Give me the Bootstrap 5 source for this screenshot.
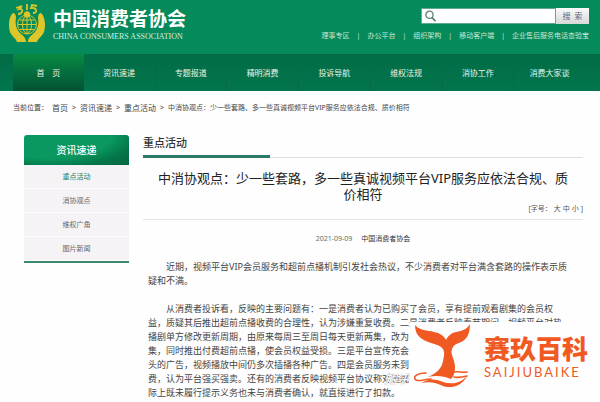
<!DOCTYPE html>
<html lang="zh-CN">
<head>
<meta charset="utf-8">
<meta name="viewport" content="width=device-width, initial-scale=1">
<title>中国消费者协会</title>
<link rel="stylesheet" href="https://cdn.jsdelivr.net/npm/bootstrap@5.3.0/dist/css/bootstrap.min.css">
<style>
body{font-family:"Noto Sans","Noto Sans CJK SC",sans-serif;font-size:7px;line-height:14px;color:#444;background:#fefefe}
a{color:inherit;text-decoration:none}
.topbar{background:#048a5b;color:#fff;padding:4px 11px 4px 9px;height:54px}
.emblem{width:36px;height:38px}
.brand-cn{font-size:19px;font-weight:700;line-height:26px;margin-top:2px}
.brand-en{font-family:"Liberation Serif",serif;font-size:8px;line-height:10px;color:#d5eee2}
.searchbox{height:16px;width:168px;margin-top:4px}
.searchbox .field{background:#fff;border:1px solid #5fa98c;padding:0 3px;min-width:0}
.searchbox input{border:0;outline:0;min-width:0;width:100%;font-size:8px;padding:0 4px}
.searchbox svg{flex:none}
.searchbox button{border:0;width:33px;flex:none;font-size:8px;line-height:14px;color:#667;background:linear-gradient(#fafafa,#d5d9d7);padding:0}
.quick{gap:7px;margin-top:5px;color:#c5e8d7}
.mainnav{background:linear-gradient(#016c45,#03754d);padding:0 15px 0 13px;height:37px;font-size:8px;color:#e4f5ec}
.mainnav a{flex:1 1 0;line-height:38px;text-align:center;border-right:1px solid #046a47}
.mainnav a:last-child{border:0}
.mainnav a.current{background:linear-gradient(#088a42,#046b3c 55%,#035232);border:0}
.crumbs{padding:10px 13px 0;gap:4px;color:#444}
.crumbs a{font-size:8px}
.page-cols{padding:20px 17px 0 24px;gap:14px}
.side{width:105px;flex:none;border-bottom:2px solid #3c8a70;color:#666}
.side h2{font-size:10px;line-height:30px;margin:0;color:#fff;border-radius:3px 3px 0 0;background:radial-gradient(ellipse at 25% 0,#0a9860 0 55%,#04784a 75%,#036540)}
.side a{line-height:24px;background:#f5f3f6;border-bottom:1px solid #fefefe;height:24px}
.side a.current{color:#167d5a}
.section-head{border-bottom:1px solid #ddd;height:23px}
.section-head h2{font-size:11px;line-height:16px;width:127px;border-bottom:3px solid #2b7a65;margin:0;color:#333;height:23px;font-weight:500}
.art-title{font-size:13px;line-height:16px;margin:12px 0 0;color:#222;font-weight:400}
.sizes{border-bottom:1px solid #e3e3e3;padding-bottom:3px;color:#555;gap:2px}
.meta{gap:9px;padding-top:12px;color:#333}
.meta time{color:#4d776c}
.copy{font-size:9px;line-height:14px;padding:14px 0 0 5px;color:#444}
.copy p{margin:0 0 14px;text-indent:18px;white-space:nowrap}
.copy p:last-child{margin:0}
.stamp{position:absolute;right:0;bottom:0;width:190px;height:78px;background:#fefefe;color:#f05a22;gap:12px;padding:0 12px 0 4px}
.tail{width:56px;height:64px;flex:none;margin-top:1px}
.stamp-cn{font-size:26px;line-height:30px;font-weight:900;margin-top:12px}
.stamp-en{font-family:Lato,sans-serif;font-size:13px;line-height:16px;letter-spacing:2px}
.ghost{position:absolute;right:190px;bottom:14px;font-size:13px;font-style:italic;color:#fff;text-shadow:0 0 1px #888}
</style>
<script src="https://cdn.jsdelivr.net/npm/bootstrap@5.3.0/dist/js/bootstrap.bundle.min.js"></script>
</head>
<body>
<div class="position-relative overflow-hidden">
<header class="topbar d-flex justify-content-between">
  <a href="#" class="d-flex gap-2">
    <svg class="emblem" viewBox="0 0 36 38" fill="none" stroke="#dcc62a">
      <path fill="#dcc62a" stroke="none" d="M4 9C0 12-1 22 1 28c2 5 6 6 7 10h9c0-5-4-7-7-10-3-4-4-9-3-14 0-3-1-5-3-5zM32 9c4 3 5 13 3 19-2 5-6 6-7 10h-9c0-5 4-7 7-10 3-4 4-9 3-14 0-3 1-5 3-5z"/>
      <circle cx="18" cy="20.500" r="9.500"/><ellipse cx="18" cy="20.500" rx="4.500" ry="9"/>
      <path d="M18 11v19M9 20.500h18M10.500 16h15M10.500 25.500h15"/>
      <circle cx="18" cy="10.500" r="2.800" fill="#dcc62a"/>
      <path stroke-width="1.800" d="M7 4l6-2-3 3c5-1 4 5-1 5M18 0v6M28 2l-5-1-1 3c6-1 7 5 2 5"/>
    </svg>
    <span class="d-flex flex-column"><span class="brand-cn">中国消费者协会</span><span class="brand-en">CHINA CONSUMERS ASSOCIATION</span></span>
  </a>
  <div class="d-flex flex-column align-items-end">
    <form class="searchbox d-flex">
      <label class="field d-flex align-items-center flex-fill">
        <svg width="11" height="12" viewBox="0 0 11 12" fill="none" stroke="#5b7f78" stroke-width="1.300"><circle cx="4.500" cy="4.800" r="3.600"/><path stroke-width="1.800" d="M7 7.600l3.500 3.600"/></svg>
        <input type="text" class="flex-fill" aria-label="搜索内容">
      </label>
      <button type="button">搜&nbsp; 索</button>
    </form>
    <nav class="quick d-flex text-nowrap" aria-label="快捷链接">
      <a href="#">理事专区</a><span>|</span><a href="#">办公平台</a><span>|</span><a href="#">组织架构</a><span>|</span><a href="#">移动客户端</a><span>|</span><a href="#">企业售后服务电话查验宝</a>
    </nav>
  </div>
</header>
<nav class="mainnav d-flex text-nowrap" aria-label="主导航">
  <a href="#" class="current">首　页</a><a href="#">资讯速递</a><a href="#">专题报道</a><a href="#">精明消费</a><a href="#">投诉导航</a><a href="#">维权法规</a><a href="#">消协工作</a><a href="#">消费大家谈</a>
</nav>
<nav class="crumbs d-flex text-nowrap" aria-label="当前位置">
  <span>当前位置：</span><a href="#">首页</a><span>&gt;</span><a href="#">资讯速递</a><span>&gt;</span><a href="#">重点活动</a><span>&gt;</span><span>中消协观点：少一些套路、多一些真诚视频平台VIP服务应依法合规、质价相符</span>
</nav>
<div class="page-cols d-flex align-items-start">
  <aside class="side text-center">
    <h2>资讯速递</h2>
    <nav class="d-flex flex-column" aria-label="栏目"><a href="#" class="current">重点活动</a><a href="#">消协观点</a><a href="#">维权广角</a><a href="#">图片新闻</a></nav>
  </aside>
  <main class="flex-fill">
    <div class="section-head"><h2>重点活动</h2></div>
    <h1 class="art-title text-center">中消协观点：少一些套路，多一些真诚视频平台VIP服务应依法合规、质<br>价相符</h1>
    <div class="sizes d-flex justify-content-end"><span>[字号：</span><a href="#">大</a><a href="#">中</a><a href="#">小</a><span>]</span></div>
    <div class="meta d-flex justify-content-center"><time datetime="2021-09-09">2021-09-09</time><span>中国消费者协会</span></div>
    <article class="copy">
      <p>近期，视频平台VIP会员服务和超前点播机制引发社会热议，不少消费者对平台满含套路的操作表示质<br>疑和不满。</p>
      <p>从消费者投诉看，反映的主要问题有：一是消费者认为已购买了会员，享有提前观看剧集的会员权<br>益，质疑其后推出超前点播收费的合理性，认为涉嫌重复收费。二是消费者反映春节期间，视频平台对热<br>播剧单方修改更新周期，由原来每周三至周日每天更新两集，改为<br>集，同时推出付费超前点播，使会员权益受损。三是平台宣传充会<br>头的广告，视频播放中间仍多次插播各种广告。四是会员服务未到<br>费，认为平台强买强卖。还有的消费者反映视频平台协议称对违规<br>际上既未履行提示义务也未与消费者确认，就直接进行了扣款。</p>
    </article>
  </main>
</div>
<span class="ghost">知乎</span>
<div class="stamp d-flex justify-content-between">
  <svg class="tail" viewBox="0 0 56 64" fill="#f05a22">
    <path d="M1 2C6 8 13 7 20 9c6 1 10 4 12 8 2-4 5-7 10-8 7-1 11-3 14-8 0 10-3 16-11 19-4 1-6 3-7 6-2 6 3 10 3 18 0 5-1 9-4 12-7-3-15-4-23-2 9-4 14-9 15-16 1-5 2-8 0-12C24 18 1 22 1 2z"/>
    <path fill="none" stroke="#f05a22" stroke-width="1.600" stroke-linecap="round" d="M12 50C3 50-2 54 2 57c4 2 8-1 15-1M40 49c5-1 8 1 13 0M40 54c5 1 9 0 13-1"/>
    <path d="M7 60c9-5 15-4 22-1 9 3 18 1 24-6-5 10-15 13-24 10-7-3-12-5-22-3z"/>
  </svg>
  <div class="d-flex flex-column text-nowrap"><span class="stamp-cn">赛玖百科</span><span class="stamp-en">SAIJIUBAIKE</span></div>
</div>
</div>
</body>
</html>
